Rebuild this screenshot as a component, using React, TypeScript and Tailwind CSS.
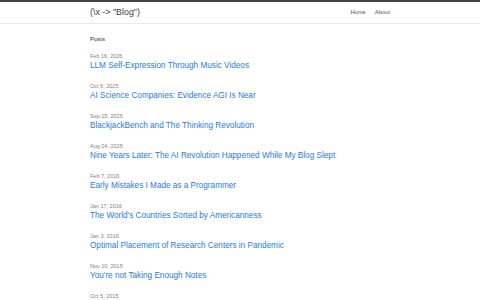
const posts = [
  { date: 'Feb 16, 2026', title: 'LLM Self-Expression Through Music Videos' },
  { date: 'Oct 6, 2025', title: 'AI Science Companies: Evidence AGI Is Near' },
  { date: 'Sep 15, 2025', title: 'BlackjackBench and The Thinking Revolution' },
  { date: 'Aug 24, 2025', title: 'Nine Years Later: The AI Revolution Happened While My Blog Slept' },
  { date: 'Feb 7, 2016', title: 'Early Mistakes I Made as a Programmer' },
  { date: 'Jan 17, 2016', title: "The World's Countries Sorted by Americanness" },
  { date: 'Jan 3, 2016', title: 'Optimal Placement of Research Centers in Pandemic' },
  { date: 'Nov 10, 2015', title: "You're not Taking Enough Notes" },
  { date: 'Oct 5, 2015', title: 'Why I Blog' },
];

export default function App() {
  return (
    <div className="min-h-[300px] bg-white font-['Liberation_Sans',Arial,sans-serif] text-[#111]">
      {/* Header */}
      <header className="border-t-2 border-b border-t-[#424242] border-b-[#e8e8e8]">
        <div className="mx-auto flex h-[21px] w-[300px] items-center justify-between">
          <a className="text-[8.9px] leading-[21px] text-[#424242]">(\x -&gt; "Blog")</a>
          <nav className="flex gap-[9px] text-[5.8px] text-[#555]">
            <a>Home</a>
            <a>About</a>
          </nav>
        </div>
      </header>

      {/* Post list */}
      <main className="mx-auto w-[300px] pt-[11px]">
        <h1 className="mb-[10px] text-[6px] leading-[8px] text-[#333]">Posts</h1>
        <ul>
          {posts.map((post) => (
            <li key={post.date} className="mb-[12px]">
              <div className="text-[5.5px] leading-[7px] text-[#828282]">{post.date}</div>
              <a className="block whitespace-nowrap text-[8.2px] leading-[11px] text-[#2a7ae2]">
                {post.title}
              </a>
            </li>
          ))}
        </ul>
      </main>
    </div>
  );
}
